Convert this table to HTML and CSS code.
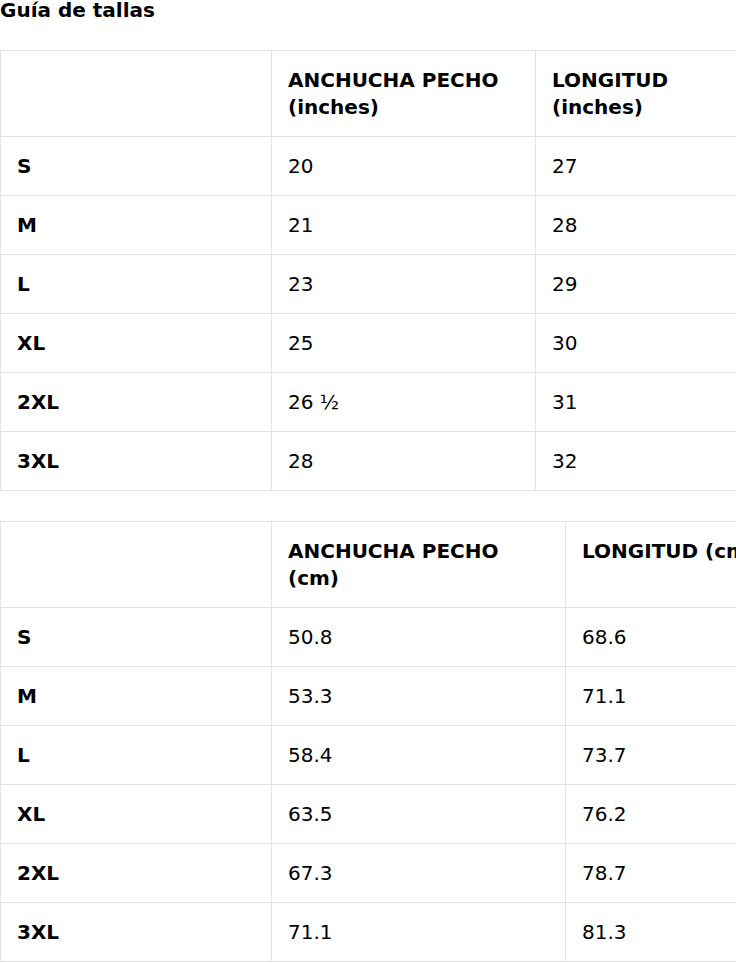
FILE: index.html
```html
<!DOCTYPE html>
<html lang="es">
<head>
<meta charset="utf-8">
<link rel="stylesheet" href="styles.css">
</head>
<body>
<div class="page">
  <h2 class="title">Guía de tallas</h2>
  <table class="sizes sizes-in">
    <colgroup><col class="c1"><col class="c2"><col class="c3"></colgroup>
    <thead>
      <tr><th></th><th>ANCHUCHA PECHO (inches)</th><th>LONGITUD (inches)</th></tr>
    </thead>
    <tbody>
      <tr><th>S</th><td>20</td><td>27</td></tr>
      <tr><th>M</th><td>21</td><td>28</td></tr>
      <tr><th>L</th><td>23</td><td>29</td></tr>
      <tr><th>XL</th><td>25</td><td>30</td></tr>
      <tr><th>2XL</th><td>26 ½</td><td>31</td></tr>
      <tr><th>3XL</th><td>28</td><td>32</td></tr>
    </tbody>
  </table>
  <table class="sizes sizes-cm">
    <colgroup><col class="c1"><col class="c2"><col class="c3"></colgroup>
    <thead>
      <tr><th></th><th>ANCHUCHA PECHO (cm)</th><th>LONGITUD (cm)</th></tr>
    </thead>
    <tbody>
      <tr><th>S</th><td>50.8</td><td>68.6</td></tr>
      <tr><th>M</th><td>53.3</td><td>71.1</td></tr>
      <tr><th>L</th><td>58.4</td><td>73.7</td></tr>
      <tr><th>XL</th><td>63.5</td><td>76.2</td></tr>
      <tr><th>2XL</th><td>67.3</td><td>78.7</td></tr>
      <tr><th>3XL</th><td>71.1</td><td>81.3</td></tr>
    </tbody>
  </table>
</div>
</body>
</html>
```
FILE: styles.css
```css
html, body {
  margin: 0;
  padding: 0;
  background: #fff;
}
body {
  font-family: "DejaVu Sans", sans-serif;
  color: #000;
  font-size: 20px;
}
.page {
  width: 736px;
  overflow: hidden;
}
.title {
  margin: 0 0 30px 0;
  font-size: 20px;
  line-height: 20px;
  font-weight: bold;
}
.sizes {
  border-collapse: collapse;
  table-layout: fixed;
  margin: 0 0 30px 0;
}
.sizes-in { width: 775px; }
.sizes-cm { width: 805px; }
.sizes .c1 { width: 271px; }
.sizes-in .c2 { width: 264px; }
.sizes-cm .c2 { width: 294px; }
.sizes .c3 { width: 240px; }
.sizes th, .sizes td {
  border: 1px solid #e3e3e3;
  padding: 16px 16px 15px 16px;
  line-height: 27px;
  text-align: left;
  vertical-align: top;
  font-size: 20px;
}
.sizes th { font-weight: bold; }
.sizes td { font-weight: normal; }
```
